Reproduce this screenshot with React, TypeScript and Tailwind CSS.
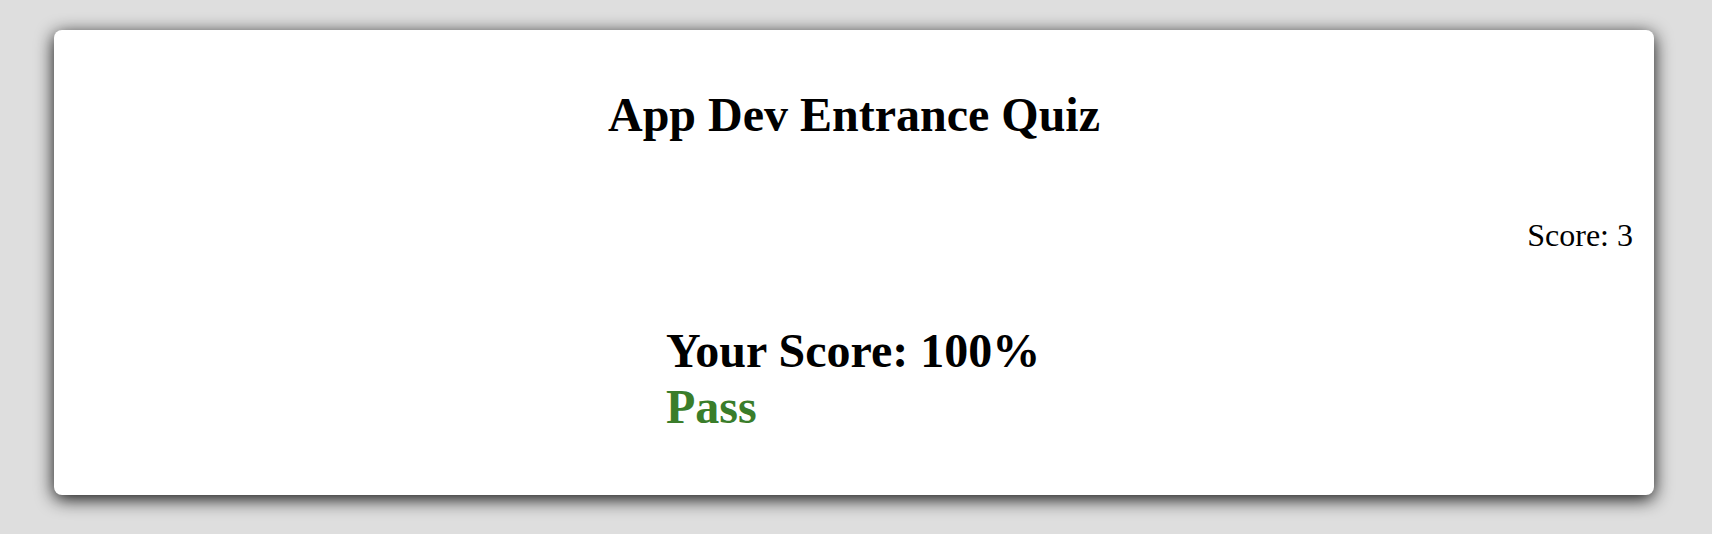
export default function App() {
  return (
    <div className="min-h-[534px] w-full bg-[#dedede] pl-[54px] pt-[30px] font-['Liberation_Serif','Times_New_Roman',serif] text-black">
      <div className="w-[1600px] h-[465px] rounded-lg bg-white shadow-[0_4px_18px_rgba(0,0,0,0.95)] flex flex-col">
        <h1 className="mt-[57px] text-center text-[48px] leading-[56px] font-bold">
          App Dev Entrance Quiz
        </h1>

        <div className="mt-[74px] pr-[21px] text-right text-[32px] leading-[36px]">
          Score: 3
        </div>

        <div className="mt-[70px] pl-[612px] text-[48px] leading-[56px] font-bold">
          <div>Your Score: 100%</div>
          <div className="text-[#3a7d2a]">Pass</div>
        </div>
      </div>
    </div>
  )
}
